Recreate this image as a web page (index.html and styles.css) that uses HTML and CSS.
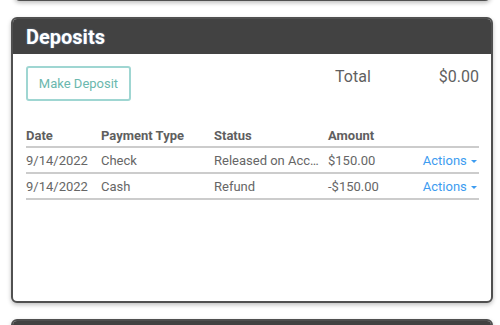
FILE: index.html
```html
<!DOCTYPE html>
<html lang="en">
<head>
  <meta charset="UTF-8" />
  <title>Deposits</title>
  <link rel="stylesheet" href="styles.css">
</head>
<body>
  <!-- previous panel, mostly scrolled away -->
  <div class="panel panel-prev"></div>

  <!-- DEPOSITS -->
  <div class="panel">
    <div class="panel-header">Deposits</div>
    <div class="panel-body">
      <div class="deposit-top">
        <button class="btn-outline">Make Deposit</button>
        <div class="total">
          <span class="total-label">Total</span>
          <span class="total-value">$0.00</span>
        </div>
      </div>

      <table class="deposits">
        <thead>
          <tr>
            <th class="col-date">Date</th>
            <th class="col-type">Payment Type</th>
            <th class="col-status">Status</th>
            <th class="col-amount">Amount</th>
            <th class="col-actions"></th>
          </tr>
        </thead>
        <tbody>
          <tr>
            <td>9/14/2022</td>
            <td>Check</td>
            <td class="truncate">Released on Account</td>
            <td>$150.00</td>
            <td class="col-actions"><a class="actions">Actions <span class="caret"></span></a></td>
          </tr>
          <tr>
            <td>9/14/2022</td>
            <td>Cash</td>
            <td class="truncate">Refund</td>
            <td>-$150.00</td>
            <td class="col-actions"><a class="actions">Actions <span class="caret"></span></a></td>
          </tr>
        </tbody>
      </table>
    </div>
  </div>

  <!-- next panel -->
  <div class="panel panel-next">
    <div class="panel-header"></div>
  </div>
</body>
</html>
```
FILE: styles.css
```css
body {
  margin: 0;
  background: #ffffff;
  font-family: Roboto, "Liberation Sans", sans-serif;
  color: #666666;
  overflow: hidden;
}

.panel {
  margin: 0 7px 16px 11px;
  border: 2px solid #505050;
  border-radius: 6px;
  background: #fff;
  box-shadow: 0 2px 4px rgba(0, 0, 0, 0.25);
  overflow: hidden;
  height: 286px;
  box-sizing: border-box;
}

.panel-prev {
  margin-top: -100px;
  margin-left: 14px;
  margin-right: 9px;
  height: 101px;
}

.panel-header {
  background: #424242;
  color: #ffffff;
  font-size: 20px;
  font-weight: bold;
  height: 35px;
  line-height: 36px;
  padding-left: 13px;
  text-shadow: 0 0 2px rgba(120, 170, 230, 0.6);
}

.panel-body {
  padding: 12px 12px 0 13px;
}

.deposit-top {
  display: flex;
  justify-content: space-between;
  align-items: flex-start;
}

.btn-outline {
  font-family: Roboto, "Liberation Sans", sans-serif;
  background: #fff;
  border: 2px solid #9fd6d2;
  border-radius: 3px;
  color: #6bb8ae;
  font-size: 13px;
  width: 105px;
  height: 35px;
  padding: 0;
}

.total {
  display: flex;
  font-size: 16px;
  color: #5f5f5f;
  margin-top: 1px;
}

.total-label {
  margin-right: 68px;
}

.deposits {
  width: 100%;
  border-collapse: collapse;
  margin-top: 27px;
  font-size: 13px;
  table-layout: fixed;
}

.deposits th {
  text-align: left;
  font-weight: bold;
  color: #5f5f5f;
  padding: 0 0 3px 0;
  border-bottom: 2px solid #cccccc;
}

.deposits td {
  padding: 0;
  height: 24px;
  border-bottom: 2px solid #cccccc;
  white-space: nowrap;
}

.col-date { width: 75px; }
.col-type { width: 113px; }
.col-status { width: 114px; }
.col-amount { width: 80px; }

.deposits .col-actions {
  text-align: right;
  padding-right: 2px;
}

.deposits .truncate {
  overflow: hidden;
  text-overflow: ellipsis;
  padding-right: 8px;
}

.actions {
  color: #3d9cf0;
  font-size: 13px;
  cursor: pointer;
}

.caret {
  display: inline-block;
  width: 0;
  height: 0;
  border-left: 3px solid transparent;
  border-right: 3px solid transparent;
  border-top: 3px solid #3d9cf0;
  vertical-align: middle;
  margin-left: 1px;
}

.panel-next {
  height: 40px;
}

.panel-next .panel-header {
  height: 40px;
}
```
